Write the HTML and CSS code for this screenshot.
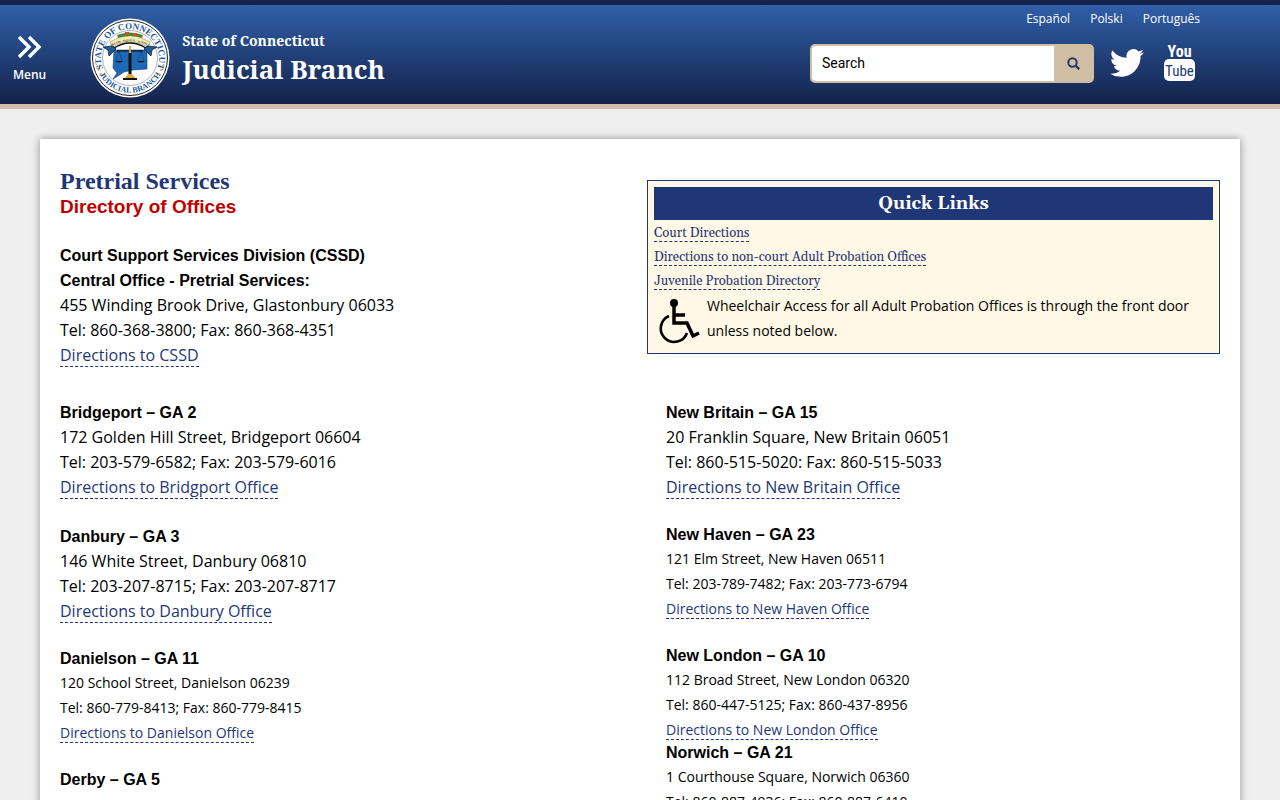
FILE: index.html
```
<!DOCTYPE html>
<html lang="en">

<head>
    <meta charset="UTF-8">
    <meta name="viewport" content="width=device-width, initial-scale=1.0">
    <title>Pretrial Services - Directory of Offices</title>
    <link rel="stylesheet" href="styles.css">
</head>

<body>
    <header class="header">
        <button class="menu" type="button">
            <svg width="24" height="24" viewBox="0 0 24 24" aria-hidden="true">
                <path d="M1 2l10 10L1 22M11 2l10 10-10 10" fill="none" stroke="#fff" stroke-width="3.4" />
            </svg>
            <span>Menu</span>
        </button>

        <a class="brand" href="#">
            <svg class="seal" width="80" height="80" viewBox="0 0 80 80" aria-hidden="true">
                <defs>
                    <path id="arc-top" d="M16.5 57A29 29 0 1 1 63.5 57" />
                    <path id="arc-bottom" d="M6 48A35 35 0 0 0 74 48" />
                    <path id="arc-motto" d="M20 29Q40 18 60 29" />
                </defs>
                <circle cx="40" cy="40" r="39.5" fill="#fff" />
                <circle cx="40" cy="40" r="37.5" fill="none" stroke="#222" />
                <circle cx="40" cy="40" r="27.5" fill="none" stroke="#8a9099" stroke-width=".7" />
                <text class="seal-text"><textPath href="#arc-top" startOffset="50%" text-anchor="middle">STATE OF CONNECTICUT</textPath></text>
                <text class="seal-text bottom"><textPath href="#arc-bottom" startOffset="50%" text-anchor="middle">JUDICIAL BRANCH</textPath></text>
                <g fill="#e5a83a">
                    <circle cx="7.5" cy="48" r="1" /><circle cx="9" cy="52" r="1" /><circle cx="11" cy="56" r="1" />
                    <circle cx="72.5" cy="48" r="1" /><circle cx="71" cy="52" r="1" /><circle cx="69" cy="56" r="1" />
                </g>
                <!-- state outline -->
                <path d="M24 32h33v19l-14 1-9 2-6 4-5 3 4-6-4-5z" fill="#1e68b5" stroke="#123f78" stroke-width=".6" />
                <!-- ribbon -->
                <path d="M20 24Q40 11 60 24L58 29Q40 19 22 29z" fill="#f5ecb0" stroke="#777" stroke-width=".5" />
                <path d="M27 17Q40 12 53 17L52 20Q40 16 28 20z" fill="#4c8437" />
                <path d="M35 14h4v3h-4zM43 15h4v3h-4z" fill="#c5532c" />
                <path d="M13 29l10-1 3 3-7 7-1-6zM67 29l-10-1-3 3 7 7 1-6z" fill="#195d9f" stroke="#111" stroke-width=".7" />
                <path d="M24 30Q40 20 56 30" fill="none" stroke="#111" stroke-width="1.4" />
                <text class="seal-motto"><textPath href="#arc-motto" startOffset="50%" text-anchor="middle">TRUTH · EQUITY · JUSTICE</textPath></text>
                <!-- scales -->
                <path d="M27 33h26M29 33l-3 10M29 33l3 10M51 33l-3 10M51 33l3 10" fill="none" stroke="#123f78" stroke-width=".6" />
                <path d="M27 33h26" stroke="#111" />
                <path d="M25 43h8q-4 3-8 0zM47 43h8q-4 3-8 0z" fill="#111" />
                <path d="M39 28h2v8h-2z" fill="#dca53c" />
                <path d="M38.5 35h3v23h-3z" fill="#111" />
                <path d="M34 61l4-5h4l4 5z" fill="#dca53c" />
                <path d="M33 60h14v2H33z" fill="#111" />
            </svg>
            <span class="brand-text">
                <span class="brand-state">State of Connecticut</span>
                <span class="brand-name">Judicial Branch</span>
            </span>
        </a>

        <div class="tools">
            <nav class="languages" aria-label="Languages">
                <a href="#">Español</a>
                <a href="#">Polski</a>
                <a href="#">Português</a>
            </nav>
            <div class="tools-row">
                <form class="search">
                    <input type="text" aria-label="Search" value="Search">
                    <button type="submit" aria-label="Submit search">
                        <svg width="13" height="13" viewBox="0 0 13 13" aria-hidden="true">
                            <circle cx="5.5" cy="5.5" r="4.2" fill="none" stroke="#24386f" stroke-width="2" />
                            <path d="M8.5 8.5l3.7 3.7" stroke="#24386f" stroke-width="2.4" />
                        </svg>
                    </button>
                </form>
                <a class="social" href="#" aria-label="Twitter">
                    <svg width="34" height="34" viewBox="0 0 24 24" aria-hidden="true">
                        <path fill="#fff" d="M23.95 4.57a10 10 0 0 1-2.82.77 4.96 4.96 0 0 0 2.16-2.72 9.9 9.9 0 0 1-3.12 1.19 4.92 4.92 0 0 0-8.38 4.48A13.93 13.93 0 0 1 1.64 3.16a4.92 4.92 0 0 0 1.52 6.57 4.9 4.9 0 0 1-2.23-.61v.06a4.92 4.92 0 0 0 3.95 4.83 5 5 0 0 1-2.21.08 4.94 4.94 0 0 0 4.6 3.42A9.87 9.87 0 0 1 0 19.54a14 14 0 0 0 7.55 2.21c9.05 0 14-7.5 14-13.98 0-.21 0-.42-.02-.63a9.94 9.94 0 0 0 2.46-2.55z" />
                    </svg>
                </a>
                <a class="social" href="#" aria-label="YouTube">
                    <svg width="32" height="40" viewBox="0 0 32 40" aria-hidden="true">
                        <rect x="0" y="16" width="31" height="22" rx="5" fill="#fff" />
                        <text class="yt-you" x="15.5" y="14" text-anchor="middle">You</text>
                        <text class="yt-tube" x="15.5" y="33" text-anchor="middle">Tube</text>
                    </svg>
                </a>
            </div>
        </div>
    </header>

    <main class="page">
        <div class="intro">
            <div class="intro-text">
                <h1>Pretrial Services</h1>
                <h2>Directory of Offices</h2>
                <section class="office">
                    <h3>Court Support Services Division (CSSD)<br>Central Office - Pretrial Services:</h3>
                    <p>455 Winding Brook Drive, Glastonbury 06033</p>
                    <p>Tel: 860-368-3800; Fax: 860-368-4351</p>
                    <p><a href="#">Directions to CSSD</a></p>
                </section>
            </div>

            <aside class="quick-links">
                <h2>Quick Links</h2>
                <ul>
                    <li><a href="#">Court Directions</a></li>
                    <li><a href="#">Directions to non-court Adult Probation Offices</a></li>
                    <li><a href="#">Juvenile Probation Directory</a></li>
                </ul>
                <div class="access">
                    <svg width="42" height="46" viewBox="0 0 42 46" aria-hidden="true">
                        <circle cx="15" cy="5" r="4" />
                        <path d="M15 8v17h13l6 13 6-3M15 17h11" fill="none" stroke="#000" stroke-width="3.5" />
                        <path d="M10 18A13.5 13.5 0 1 0 28 35" fill="none" stroke="#000" stroke-width="2.6" />
                    </svg>
                    <p>Wheelchair Access for all Adult Probation Offices is through the front door unless noted below.</p>
                </div>
            </aside>
        </div>

        <div class="offices">
            <div class="column">
                <section class="office">
                    <h3>Bridgeport – GA 2</h3>
                    <p>172 Golden Hill Street, Bridgeport 06604</p>
                    <p>Tel: 203-579-6582; Fax: 203-579-6016</p>
                    <p><a href="#">Directions to Bridgport Office</a></p>
                </section>
                <section class="office">
                    <h3>Danbury – GA 3</h3>
                    <p>146 White Street, Danbury 06810</p>
                    <p>Tel: 203-207-8715; Fax: 203-207-8717</p>
                    <p><a href="#">Directions to Danbury Office</a></p>
                </section>
                <section class="office small">
                    <h3>Danielson – GA 11</h3>
                    <p>120 School Street, Danielson 06239</p>
                    <p>Tel: 860-779-8413; Fax: 860-779-8415</p>
                    <p><a href="#">Directions to Danielson Office</a></p>
                </section>
                <section class="office small">
                    <h3>Derby – GA 5</h3>
                </section>
            </div>

            <div class="column">
                <section class="office">
                    <h3>New Britain – GA 15</h3>
                    <p>20 Franklin Square, New Britain 06051</p>
                    <p>Tel: 860-515-5020: Fax: 860-515-5033</p>
                    <p><a href="#">Directions to New Britain Office</a></p>
                </section>
                <section class="office small">
                    <h3>New Haven – GA 23</h3>
                    <p>121 Elm Street, New Haven 06511</p>
                    <p>Tel: 203-789-7482; Fax: 203-773-6794</p>
                    <p><a href="#">Directions to New Haven Office</a></p>
                </section>
                <section class="office small">
                    <h3>New London – GA 10</h3>
                    <p>112 Broad Street, New London 06320</p>
                    <p>Tel: 860-447-5125; Fax: 860-437-8956</p>
                    <p><a href="#">Directions to New London Office</a></p>
                    <h3>Norwich – GA 21</h3>
                    <p>1 Courthouse Square, Norwich 06360</p>
                    <p>Tel: 860-887-4936; Fax: 860-887-6410</p>
                </section>
            </div>
        </div>
    </main>
</body>

</html>
```
FILE: styles.css
```
* {
    margin: 0;
    padding: 0;
    box-sizing: border-box;
}

body {
    background-color: #efefef;
    color: #000;
    font-family: "Open Sans", sans-serif;
    font-size: 16px;
    line-height: 25px;
}

a {
    color: #1f3776;
    text-decoration: none;
}

/* header */
.header {
    display: flex;
    align-items: center;
    padding: 0 80px 0 13px;
    border-top: 5px solid #14234b;
    border-bottom: 5px solid #d3bcab;
    background: linear-gradient(#305fa8, #14234b);
}

.menu {
    display: flex;
    flex-direction: column;
    align-items: center;
    gap: 6px;
    margin-top: 10px;
    border: none;
    background: none;
    color: #fff;
    font-family: "Open Sans", sans-serif;
    font-size: 12px;
    font-weight: 600;
    line-height: 20px;
    cursor: pointer;
}

.brand {
    display: flex;
    align-items: center;
    gap: 12px;
    margin-left: 44px;
    margin-top: 6px;
    color: #fff;
}

.seal-text {
    fill: #1b57a0;
    font-family: "Liberation Serif", serif;
    font-size: 9px;
    font-weight: bold;
}

.seal-text.bottom {
    font-size: 8px;
}

.seal-motto {
    fill: #333;
    font-family: "Liberation Serif", serif;
    font-size: 3px;
    font-weight: bold;
}

.brand-text {
    display: flex;
    flex-direction: column;
    font-family: "Noto Serif", "Droid Serif", Georgia, serif;
    font-weight: bold;
}

.brand-state {
    font-size: 14px;
    line-height: 22px;
}

.brand-name {
    font-size: 26px;
    line-height: 34px;
}

.tools {
    margin-left: auto;
}

.languages {
    display: flex;
    justify-content: flex-end;
    gap: 20px;
    font-size: 12px;
    line-height: 27px;
}

.languages a {
    color: #fff;
}

.tools-row {
    display: flex;
    align-items: center;
    padding: 11px 4px 21px 0;
}

.search {
    display: flex;
    height: 39px;
    border: 2px solid #cfbea3;
    border-radius: 5px;
    background-color: #cfbea3;
    overflow: hidden;
}

.search input {
    width: 242px;
    padding: 0 10px;
    border: none;
    border-radius: 3px 0 0 3px;
    background-color: #fff;
    color: #000;
    font-family: Roboto, sans-serif;
    font-size: 14px;
}

.search button {
    width: 38px;
    border: none;
    background-color: #cfbea3;
    cursor: pointer;
}

.search button svg {
    display: block;
    margin: 0 auto;
}

.social {
    display: flex;
    margin-left: 16px;
}

.social + .social {
    margin-left: 20px;
}

.yt-you,
.yt-tube {
    font-family: "Liberation Sans Narrow", "Roboto Condensed", "Liberation Sans", sans-serif;
}

.yt-you {
    fill: #fff;
    font-size: 16px;
    font-weight: bold;
}

.yt-tube {
    fill: #223c78;
    font-size: 15px;
}

/* content */
.page {
    margin: 30px 40px;
    padding: 30px 20px;
    background-color: #fff;
    box-shadow: 0 0 8px rgba(0, 0, 0, 0.4);
}

.intro {
    display: grid;
    grid-template-columns: 1fr 1fr;
    gap: 14px;
    align-items: start;
}

.intro-text h1 {
    color: #1f3776;
    font-family: "Liberation Serif", serif;
    font-size: 24px;
    line-height: 25px;
}

.intro-text h2 {
    margin-bottom: 23px;
    color: #c00000;
    font-family: "Liberation Sans", sans-serif;
    font-size: 19px;
    line-height: 26px;
}

.quick-links {
    margin-top: 11px;
    padding: 6px 6px 9px;
    border: 1px solid #1f3776;
    background-color: #fff8e6;
    font-size: 14px;
}

.quick-links h2 {
    margin-bottom: 1px;
    background-color: #1f3776;
    color: #fff;
    font-family: Gelasio, Georgia, serif;
    font-size: 18px;
    line-height: 33px;
    text-align: center;
}

.quick-links ul {
    list-style: none;
    font-family: Gelasio, Georgia, serif;
    font-size: 13px;
    line-height: 24px;
}

.access {
    display: flex;
    gap: 6px;
    padding-left: 5px;
}

.access svg {
    flex-shrink: 0;
    margin-top: 5px;
}

.intro a,
.offices a {
    border-bottom: 1px dashed #1f3776;
}

.offices {
    display: grid;
    grid-template-columns: 1fr 1fr;
    gap: 52px;
    margin-top: 32px;
}

.column {
    display: flex;
    flex-direction: column;
    gap: 24px;
}

.office h3 {
    font-family: "Liberation Sans", sans-serif;
    font-size: 16px;
    line-height: 25px;
}

.small {
    font-size: 14px;
}

.small h3 {
    line-height: 22px;
}
```
